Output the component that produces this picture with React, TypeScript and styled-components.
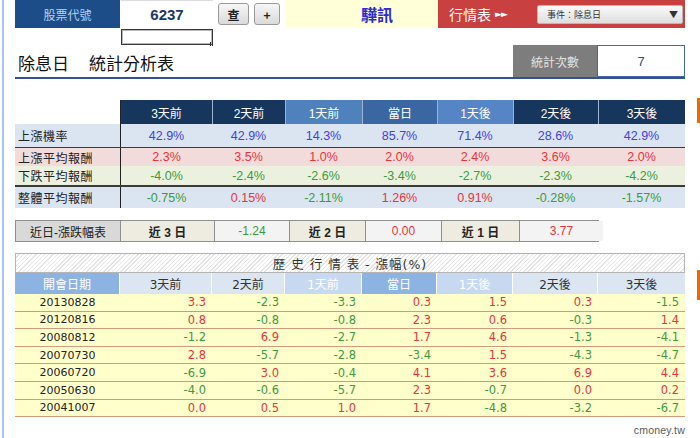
import React from "react";
import styled, { createGlobalStyle } from "styled-components";

const GlobalStyle = createGlobalStyle`
  html, body { margin: 0; padding: 0; background: #fff; overflow: hidden; }
  body { font-family: "Liberation Sans", "Noto Sans CJK TC", sans-serif; color: #222; }
  * { box-sizing: border-box; }
`;

const COLS = "105px 92px 73px 77px 75px 76px 85px 87px";
const RED = "#e8343a";
const GREEN = "#3d9a3d";
const BLUE = "#4141e0";

const Page = styled.div`
  display: flex;
  width: 700px;
  height: 438px;
  overflow: hidden;
`;
const Rail = styled.div`
  flex: none;
  width: 2px;
  margin-left: 2px;
  background: #a9c4e8;
`;
const Main = styled.main`
  flex: none;
  width: 670px;
  margin-left: 11px;
  display: flex;
  flex-direction: column;
`;
const Side = styled.aside`
  flex: 1;
  margin-left: 12px;
  display: flex;
  flex-direction: column;
  padding-top: 98px;
`;
const SideBar = styled.div<{ $h: number; $mt?: number }>`
  height: ${(p) => p.$h}px;
  margin-top: ${(p) => p.$mt ?? 0}px;
  background: #e46c0a;
`;

/* ---------- top bar ---------- */
const TopBar = styled.div`
  display: flex;
  height: 28px;
  align-items: stretch;
`;
const CodeLabel = styled.div`
  width: 105px;
  background: #1d4d88;
  color: #b9d0ee;
  font-size: 12px;
  font-family: "Noto Sans CJK TC", sans-serif;
  display: flex;
  align-items: center;
  justify-content: center;
`;
const CodeValue = styled.div`
  width: 92px;
  margin-left: 1px;
  color: #1b3866;
  font-size: 15px;
  font-weight: 700;
  display: flex;
  align-items: center;
  justify-content: center;
  border-top: 1px solid #ddd;
`;
const Btn = styled.button<{ $w: number; $ml: number }>`
  width: ${(p) => p.$w}px;
  height: 22px;
  margin-left: ${(p) => p.$ml}px;
  align-self: center;
  padding: 0;
  border: 1px solid #9a9a9a;
  border-radius: 3px;
  background: linear-gradient(#f6f6f6, #dadada);
  font-family: "Noto Sans CJK TC", "Liberation Sans", sans-serif;
  font-size: 12px;
  font-weight: 700;
  color: #222;
  display: flex;
  align-items: center;
  justify-content: center;
`;
const NameCell = styled.div`
  width: 152px;
  margin-left: 6px;
  background: #ffffd8;
  color: #2b2bd2;
  font-size: 16px;
  font-weight: 700;
  font-family: "Noto Sans CJK TC", sans-serif;
  display: flex;
  align-items: center;
  padding-left: 75px;
`;
const MarketCell = styled.div`
  flex: 1;
  background: #c8403f;
  display: flex;
  align-items: center;
  padding-left: 11px;
  padding-right: 2px;
  color: #fff;
  font-size: 14px;
  font-family: "Noto Sans CJK TC", sans-serif;
`;
const Arrows = styled.span`
  font-size: 9px;
  margin-left: 4px;
  letter-spacing: -1px;
  font-family: "DejaVu Sans", sans-serif;
`;
const Select = styled.div`
  margin-left: auto;
  width: 146px;
  height: 19px;
  border: 1px solid #b8b8b8;
  border-radius: 2px;
  background: linear-gradient(#fafafa, #dedede);
  color: #333;
  font-size: 9px;
  display: flex;
  align-items: center;
  padding: 0 4px 0 9px;
  justify-content: space-between;
`;

const SubInputRow = styled.div`
  height: 17px;
  padding-top: 1px;
  padding-left: 106px;
  display: flex;
`;
const SubInput = styled.div`
  position: relative;
  width: 92px;
  height: 16px;
  border: 1px solid #3a3a3a;
  box-shadow: inset 0 0 0 1px #b5b5b5;
  &::after {
    content: "";
    position: absolute;
    right: -2px;
    bottom: -2px;
    width: 4px;
    height: 4px;
    background: repeating-linear-gradient(90deg, #333 0 1px, transparent 1px 2px);
  }
`;

/* ---------- title ---------- */
const TitleRow = styled.div`
  height: 34px;
  display: flex;
  align-items: flex-start;
  border-bottom: 2px solid #34528f;
`;
const Title = styled.h1`
  margin: 8px 0 0 3px;
  font-size: 17px;
  font-weight: 400;
  font-family: "Noto Sans CJK TC", sans-serif;
  color: #111;
  display: flex;
  gap: 20px;
  line-height: 20px;
`;
const CountLabel = styled.div`
  margin-left: auto;
  width: 84px;
  height: 32px;
  background: #7d7d7d;
  color: #e2e2e2;
  font-size: 12px;
  font-family: "Noto Sans CJK TC", sans-serif;
  display: flex;
  align-items: center;
  justify-content: center;
`;
const CountValue = styled.div`
  width: 88px;
  height: 32px;
  border: 1px solid #4766a6;
  color: #2d4b9a;
  font-size: 13px;
  display: flex;
  align-items: center;
  justify-content: center;
`;

/* ---------- stats table ---------- */
const Stats = styled.section`
  margin-top: 21px;
  display: flex;
  flex-direction: column;
`;
const StatRow = styled.div<{ $h: number; $bg: string; $line?: number }>`
  display: grid;
  grid-template-columns: ${COLS};
  height: ${(p) => p.$h + (p.$line ?? 0)}px;
  background: ${(p) => p.$bg};
  border-bottom: ${(p) => (p.$line ? `${p.$line}px solid #3a3a3a` : "none")};
`;
const HeadCell = styled.div<{ $bg: string }>`
  background: ${(p) => p.$bg};
  color: #fff;
  font-size: 12px;
  display: flex;
  align-items: center;
  justify-content: center;
  border-left: 1px solid #9db3d0;
  &:nth-child(2) { border-left: 1px solid #222; }
`;
const BlankHead = styled.div`
  background: #fff;
`;
const RowLabel = styled.div`
  font-size: 12px;
  font-family: "Noto Sans CJK TC", sans-serif;
  color: #222;
  display: flex;
  align-items: center;
  padding-left: 3px;
  letter-spacing: 0.5px;
`;
const StatCell = styled.div<{ $c: string }>`
  color: ${(p) => p.$c};
  font-size: 12.5px;
  display: flex;
  align-items: center;
  justify-content: center;
  &:nth-child(2) { border-left: 1px solid #222; }
`;

/* ---------- near table ---------- */
const Near = styled.section`
  margin-top: 12px;
  width: 584px;
  display: grid;
  grid-template-columns: 104px 93px 74px 75px 75px 77px 83px;
  gap: 1px;
  padding: 1px;
  background: #8f8f8f;
  height: 22px;
`;
const NearCell = styled.div<{ $bg: string; $c?: string; $bold?: boolean }>`
  background: ${(p) => p.$bg};
  color: ${(p) => p.$c ?? "#222"};
  font-size: 12px;
  font-weight: ${(p) => (p.$bold ? 700 : 400)};
  font-family: "Liberation Sans", "Noto Sans CJK TC", sans-serif;
  display: flex;
  align-items: center;
  justify-content: center;
`;

/* ---------- history ---------- */
const History = styled.section`
  margin-top: 11px;
  display: flex;
  flex-direction: column;
  font-family: "DejaVu Sans", "Noto Sans CJK TC", sans-serif;
`;
const HistTitle = styled.div`
  height: 20px;
  border: 1px solid #b4b4b4;
  background: repeating-linear-gradient(135deg, #fff 0 2px, #e4e4e4 2px 3px);
  font-size: 12.5px;
  color: #333;
  display: flex;
  align-items: center;
  justify-content: center;
  letter-spacing: 1px;
`;
const HistHead = styled.div`
  display: grid;
  grid-template-columns: ${COLS};
  height: 21px;
`;
const HistHeadCell = styled.div<{ $bg: string; $c: string }>`
  background: ${(p) => p.$bg};
  color: ${(p) => p.$c};
  font-size: 12px;
  display: flex;
  align-items: center;
  justify-content: center;
  border-right: 1px solid #fff;
  &:last-child { border-right: none; }
`;
const HistRow = styled.div`
  display: grid;
  grid-template-columns: ${COLS};
  height: 17.6px;
  background: #ffffcc;
  border-bottom: 1px solid #d49a7e;
  font-size: 11.5px;
`;
const DateCell = styled.div`
  color: #222;
  font-size: 11px;
  display: flex;
  align-items: center;
  justify-content: center;
`;
const NumCell = styled.div<{ $c: string }>`
  color: ${(p) => p.$c};
  display: flex;
  align-items: center;
  justify-content: flex-end;
  padding-right: 6px;
`;

const Credit = styled.div`
  margin-top: auto;
  margin-bottom: 2px;
  text-align: right;
  font-size: 10.5px;
  color: #5a5a5a;
  font-family: "Liberation Sans", sans-serif;
  letter-spacing: 0.2px;
`;

const heads = ["3天前", "2天前", "1天前", "當日", "1天後", "2天後", "3天後"];
const headBg = ["#17365d", "#17365d", "#4f81bd", "#3a67a2", "#5585c4", "#17365d", "#17365d"];

const signColor = (v: string) => (v.trim().startsWith("-") ? GREEN : RED);

const statRows: { label: string; bg: string; h: number; line?: number; vals: string[]; color?: string }[] = [
  { label: "上漲機率", bg: "#dbe5f1", h: 23, line: 1, vals: ["42.9%", "42.9%", "14.3%", "85.7%", "71.4%", "28.6%", "42.9%"], color: BLUE },
  { label: "上漲平均報酬", bg: "#f2dcdb", h: 18, vals: ["2.3%", "3.5%", "1.0%", "2.0%", "2.4%", "3.6%", "2.0%"], color: RED },
  { label: "下跌平均報酬", bg: "#ebf1de", h: 19, line: 2, vals: ["-4.0%", "-2.4%", "-2.6%", "-3.4%", "-2.7%", "-2.3%", "-4.2%"], color: GREEN },
  { label: "整體平均報酬", bg: "#dbe5f1", h: 21, vals: ["-0.75%", "0.15%", "-2.11%", "1.26%", "0.91%", "-0.28%", "-1.57%"] },
];

const histHead: { t: string; bg: string; c: string }[] = [
  { t: "開會日期", bg: "#8db3e2", c: "#fff" },
  { t: "3天前", bg: "#dce6f2", c: "#333" },
  { t: "2天前", bg: "#dce6f2", c: "#333" },
  { t: "1天前", bg: "#c6d9f1", c: "#fff" },
  { t: "當日", bg: "#8db3e2", c: "#fff" },
  { t: "1天後", bg: "#c6d9f1", c: "#fff" },
  { t: "2天後", bg: "#dce6f2", c: "#333" },
  { t: "3天後", bg: "#dce6f2", c: "#333" },
];

const history: [string, string[]][] = [
  ["20130828", ["3.3", "-2.3", "-3.3", "0.3", "1.5", "0.3", "-1.5"]],
  ["20120816", ["0.8", "-0.8", "-0.8", "2.3", "0.6", "-0.3", "1.4"]],
  ["20080812", ["-1.2", "6.9", "-2.7", "1.7", "4.6", "-1.3", "-4.1"]],
  ["20070730", ["2.8", "-5.7", "-2.8", "-3.4", "1.5", "-4.3", "-4.7"]],
  ["20060720", ["-6.9", "3.0", "-0.4", "4.1", "3.6", "6.9", "4.4"]],
  ["20050630", ["-4.0", "-0.6", "-5.7", "2.3", "-0.7", "0.0", "0.2"]],
  ["20041007", ["0.0", "0.5", "1.0", "1.7", "-4.8", "-3.2", "-6.7"]],
];

export default function App() {
  return (
    <Page>
      <GlobalStyle />
      <Rail />
      <Main>
        <TopBar>
          <CodeLabel>股票代號</CodeLabel>
          <CodeValue>6237</CodeValue>
          <Btn $w={31} $ml={5}>查</Btn>
          <Btn $w={26} $ml={5}>+</Btn>
          <NameCell>驊訊</NameCell>
          <MarketCell>
            行情表<Arrows>►►</Arrows>
            <Select>
              <span>事件：除息日</span>
              <span>▼</span>
            </Select>
          </MarketCell>
        </TopBar>
        <SubInputRow>
          <SubInput />
        </SubInputRow>
        <TitleRow>
          <Title>
            <span>除息日</span>
            <span>統計分析表</span>
          </Title>
          <CountLabel>統計次數</CountLabel>
          <CountValue>7</CountValue>
        </TitleRow>

        <Stats>
          <StatRow $h={24} $bg="#fff">
            <BlankHead />
            {heads.map((h, i) => (
              <HeadCell key={h} $bg={headBg[i]}>{h}</HeadCell>
            ))}
          </StatRow>
          {statRows.map((r) => (
            <StatRow key={r.label} $h={r.h} $bg={r.bg} $line={r.line}>
              <RowLabel>{r.label}</RowLabel>
              {r.vals.map((v, i) => (
                <StatCell key={i} $c={r.color ?? signColor(v)}>{v}</StatCell>
              ))}
            </StatRow>
          ))}
        </Stats>

        <Near>
          <NearCell $bg="#d9d9d9">近日-漲跌幅表</NearCell>
          <NearCell $bg="#eeece1" $bold>近 3 日</NearCell>
          <NearCell $bg="#f3f3f3" $c={GREEN}>-1.24</NearCell>
          <NearCell $bg="#eeece1" $bold>近 2 日</NearCell>
          <NearCell $bg="#f3f3f3" $c={RED}>0.00</NearCell>
          <NearCell $bg="#eeece1" $bold>近 1 日</NearCell>
          <NearCell $bg="#f3f3f3" $c={RED}>3.77</NearCell>
        </Near>

        <History>
          <HistTitle>歷 史 行 情 表 - 漲幅(%)</HistTitle>
          <HistHead>
            {histHead.map((h) => (
              <HistHeadCell key={h.t} $bg={h.bg} $c={h.c}>{h.t}</HistHeadCell>
            ))}
          </HistHead>
          {history.map(([d, vals]) => (
            <HistRow key={d}>
              <DateCell>{d}</DateCell>
              {vals.map((v, i) => (
                <NumCell key={i} $c={signColor(v)}>{v}</NumCell>
              ))}
            </HistRow>
          ))}
        </History>

        <Credit>cmoney.tw</Credit>
      </Main>
      <Side>
        <SideBar $h={25} />
        <SideBar $h={30} $mt={147} />
      </Side>
    </Page>
  );
}
